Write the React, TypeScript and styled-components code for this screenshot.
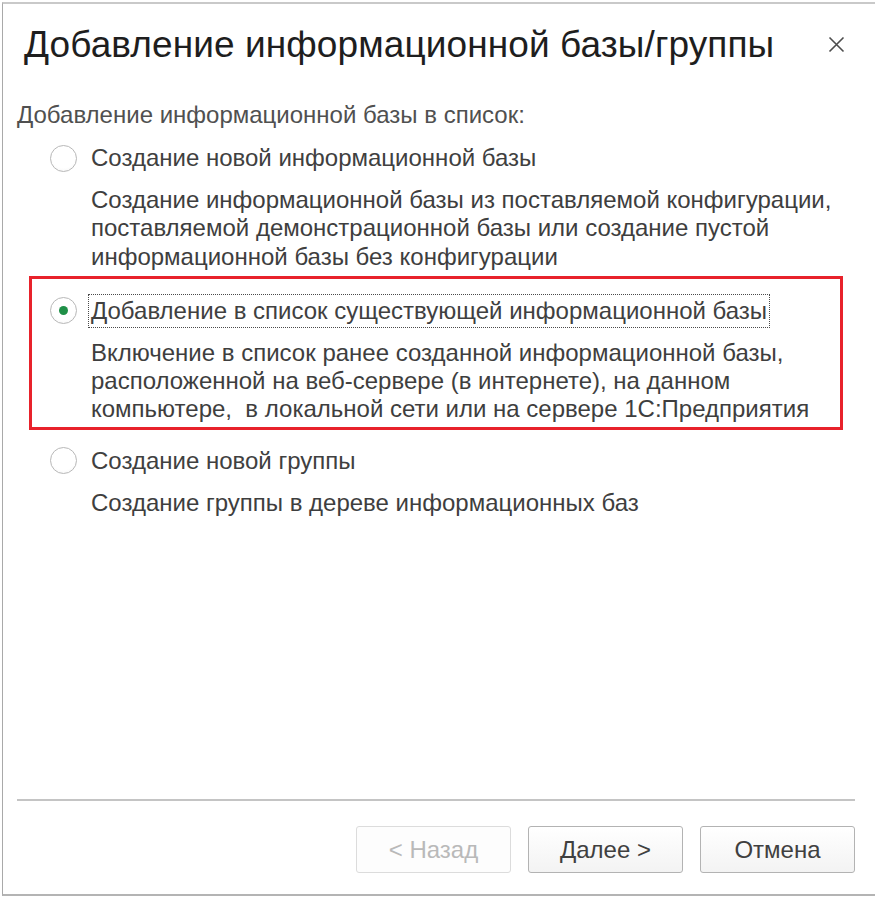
import React from 'react';
import styled, { createGlobalStyle } from 'styled-components';

const GlobalStyle = createGlobalStyle`
  html, body {
    margin: 0;
    padding: 0;
    background: #ffffff;
  }
  body {
    font-family: "Liberation Sans", Arial, sans-serif;
  }
`;

const Window = styled.div`
  margin: 2px 0 0 2px;
  height: 894px;
  box-sizing: border-box;
  border-top: 2px solid #c9c9c9;
  border-left: 1px solid #a9a9a9;
  border-bottom: 2px solid #b4b4b4;
  background: #ffffff;
  display: flex;
  flex-direction: column;
`;

const Header = styled.div`
  height: 81px;
  display: flex;
  align-items: center;
  justify-content: space-between;
  padding: 0 30px 0 21px;
`;

const Title = styled.h1`
  margin: 0;
  font-size: 37px;
  font-weight: 400;
  color: #1e1e1e;
  letter-spacing: 0.1px;
`;

const CloseButton = styled.button`
  border: none;
  background: none;
  padding: 0;
  width: 17px;
  height: 17px;
  display: flex;
  align-items: center;
  justify-content: center;
  cursor: pointer;
`;

const Body = styled.div`
  flex: 1;
  padding: 16px 20px 0 14px;
  display: flex;
  flex-direction: column;
`;

const Caption = styled.div`
  font-size: 24px;
  line-height: 28px;
  color: #505050;
`;

const Options = styled.div`
  display: flex;
  flex-direction: column;
  padding-left: 33px;
  margin-top: 12px;
`;

const Option = styled.div<{ $highlighted?: boolean; $gap: number }>`
  margin-top: ${(p) => p.$gap}px;
  ${(p) =>
    p.$highlighted
      ? `
    margin-left: -21px;
    width: 814px;
    box-sizing: border-box;
    border: 3px solid #e8222b;
    padding: 15px 0 3px 18px;
  `
      : ''}
`;

const LabelRow = styled.label`
  height: 34px;
  display: flex;
  align-items: center;
  gap: 11px;
  cursor: pointer;
`;

const Radio = styled.span<{ $checked?: boolean }>`
  width: 27px;
  height: 27px;
  box-sizing: border-box;
  border-radius: 50%;
  border: 1.5px solid #b8b8b8;
  background: radial-gradient(circle at 50% 40%, #ffffff 60%, #f1f1f1 100%);
  display: flex;
  align-items: center;
  justify-content: center;
  flex-shrink: 0;

  &::after {
    content: '';
    width: 9px;
    height: 9px;
    border-radius: 50%;
    background: #1f9048;
    display: ${(p) => (p.$checked ? 'block' : 'none')};
  }
`;

const LabelText = styled.span<{ $focused?: boolean }>`
  height: 34px;
  box-sizing: border-box;
  display: flex;
  align-items: center;
  padding: 0 2px;
  border: 1px dotted ${(p) => (p.$focused ? '#4a4a4a' : 'transparent')};
  font-size: 24px;
  color: #404040;
  white-space: nowrap;
`;

const Description = styled.div`
  margin: 11px 0 0 41px;
  font-size: 24px;
  line-height: 28.3px;
  color: #3e3e3e;
  white-space: pre;
`;

const Footer = styled.div`
  padding: 0 20px 0 14px;
`;

const Separator = styled.hr`
  margin: 0;
  border: none;
  border-top: 2px solid #c4c4c4;
`;

const ButtonRow = styled.div`
  display: flex;
  justify-content: flex-end;
  gap: 17px;
  padding: 25px 0 21px;
`;

const Button = styled.button`
  width: 155px;
  height: 47px;
  border: 1px solid #b3b3b3;
  border-radius: 3px;
  background: linear-gradient(#ffffff, #f3f3f3);
  font-family: "Liberation Sans", Arial, sans-serif;
  font-size: 24px;
  color: #404040;
  cursor: pointer;

  &:disabled {
    border-color: #dcdcdc;
    background: #fdfdfd;
    color: #b9b9b9;
    cursor: default;
  }
`;

const CloseIcon = () => (
  <svg width="17" height="17" viewBox="0 0 17 17">
    <path d="M1.5 1.5 L15.5 15.5 M15.5 1.5 L1.5 15.5" stroke="#4d4d4d" strokeWidth="1.6" fill="none" />
  </svg>
);

const options = [
  {
    label: 'Создание новой информационной базы',
    text: 'Создание информационной базы из поставляемой конфигурации,\nпоставляемой демонстрационной базы или создание пустой\nинформационной базы без конфигурации',
    gap: 0,
  },
  {
    label: 'Добавление в список существующей информационной базы',
    text: 'Включение в список ранее созданной информационной базы,\nрасположенной на веб-сервере (в интернете), на данном\nкомпьютере,  в локальной сети или на сервере 1С:Предприятия',
    gap: 5,
    selected: true,
  },
  {
    label: 'Создание новой группы',
    text: 'Создание группы в дереве информационных баз',
    gap: 14,
  },
];

export default function App() {
  return (
    <>
      <GlobalStyle />
      <Window>
        <Header>
          <Title>Добавление информационной базы/группы</Title>
          <CloseButton aria-label="Закрыть">
            <CloseIcon />
          </CloseButton>
        </Header>
        <Body>
          <Caption>Добавление информационной базы в список:</Caption>
          <Options>
            {options.map((o) => (
              <Option key={o.label} $gap={o.gap} $highlighted={o.selected}>
                <LabelRow>
                  <Radio $checked={o.selected} />
                  <LabelText $focused={o.selected}>{o.label}</LabelText>
                </LabelRow>
                <Description>{o.text}</Description>
              </Option>
            ))}
          </Options>
        </Body>
        <Footer>
          <Separator />
          <ButtonRow>
            <Button disabled>&lt; Назад</Button>
            <Button>Далее &gt;</Button>
            <Button>Отмена</Button>
          </ButtonRow>
        </Footer>
      </Window>
    </>
  );
}
